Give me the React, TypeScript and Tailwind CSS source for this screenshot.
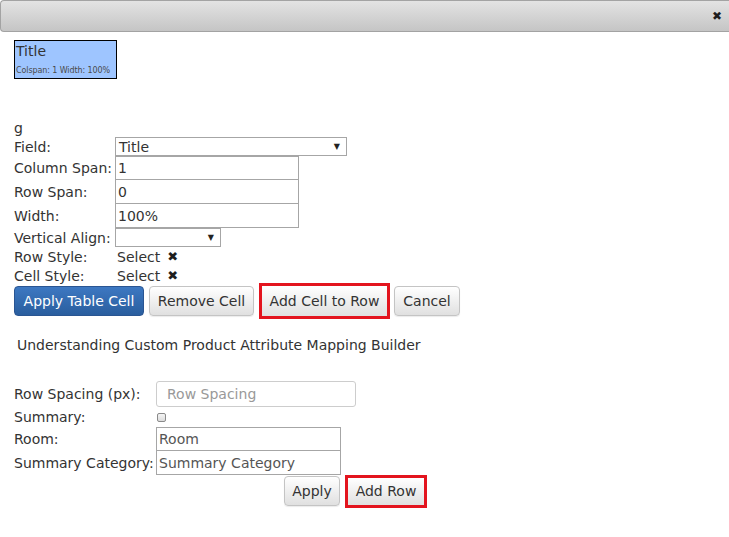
const btn =
  "h-[30px] rounded-[4px] border border-[#c4c4c4] bg-linear-to-b from-white to-[#e0e0e0] text-[14px] text-[#333] shadow-[0_1px_1px_rgba(0,0,0,0.08)] flex items-center justify-center";

function FakeSelect({ value, width }: { value: string; width: string }) {
  return (
    <div
      className={`${width} h-[19px] border border-[#a6a6a6] bg-white flex items-center justify-between pl-[3px] pr-[6px]`}
    >
      <span className="leading-none">{value}</span>
      <span className="text-[8px] leading-none text-[#222]">▼</span>
    </div>
  );
}

function Cell({ h, children }: { h: string; children?: React.ReactNode }) {
  return <div className={`${h} flex items-center whitespace-nowrap leading-none`}>{children}</div>;
}

function Picker() {
  return (
    <div className="h-[19px] flex items-center gap-[7px] pl-[2px] leading-none">
      <span>Select</span>
      <span className="text-[13px] leading-none text-[#1e1e1e]">✖</span>
    </div>
  );
}

export default function App() {
  return (
    <div className="min-h-[537px] bg-white text-[14px] text-[#333] font-['DejaVu_Sans',Verdana,sans-serif]">
      <div className="h-[32px] rounded-l-[4px] border border-r-0 border-[#a3a3a3] bg-linear-to-b from-[#e3e3e3] to-[#c5c5c5] flex items-center justify-end pr-[7px]">
        <span className="text-[12px] text-[#1e1e1e] leading-none">✖</span>
      </div>

      <div className="pl-[14px]">
        <div className="mt-[8px] w-[103px] h-[39px] border border-black bg-[#9ec5ff] flex flex-col">
          <span className="pl-[1px] pt-[1px] leading-[18px] text-[#333]">Title</span>
          <span className="pl-[1px] mt-[6px] text-[8px] leading-[9px] tracking-[-0.1px] text-[#4a4a4a] whitespace-nowrap">
            Colspan: 1 Width: 100%
          </span>
        </div>

        <div className="mt-[40px] h-[18px] leading-[18px]">g</div>

        <div className="grid grid-cols-[101px_auto] justify-start">
          <Cell h="h-[19px]">Field:</Cell>
          <FakeSelect value="Title" width="w-[232px]" />

          <Cell h="h-[24px]">Column Span:</Cell>
          <div className="w-[184px] h-[24px] border border-[#a6a6a6] flex items-center pl-[2px] leading-none">1</div>

          <Cell h="h-[24px]">Row Span:</Cell>
          <div className="w-[184px] h-[24px] border border-t-0 border-[#a6a6a6] flex items-center pl-[2px] leading-none">0</div>

          <Cell h="h-[24px]">Width:</Cell>
          <div className="w-[184px] h-[24px] border border-t-0 border-[#a6a6a6] flex items-center pl-[2px] leading-none">100%</div>

          <Cell h="h-[19px]">Vertical Align:</Cell>
          <FakeSelect value="" width="w-[106px]" />

          <Cell h="h-[19px]">Row Style:</Cell>
          <Picker />

          <Cell h="h-[19px]">Cell Style:</Cell>
          <Picker />
        </div>

        <div className="mt-[1px] flex items-center">
          <button className="w-[130px] h-[30px] rounded-[4px] border border-[#2a5592] bg-linear-to-b from-[#3d78c2] to-[#2a5e9e] text-white text-[14px] flex items-center justify-center">
            Apply Table Cell
          </button>
          <button className={`${btn} ml-[5px] w-[105px]`}>Remove Cell</button>
          <div className="ml-[5px] -my-[3px] w-[131px] h-[36px] border-[3px] border-[#e3141e] flex">
            <div className="flex-1 bg-linear-to-b from-white to-[#e0e0e0] flex items-center justify-center">
              Add Cell to Row
            </div>
          </div>
          <button className={`${btn} ml-[4px] w-[66px]`}>Cancel</button>
        </div>

        <p className="mt-[20px] pl-[3px] leading-[18px]">
          Understanding Custom Product Attribute Mapping Builder
        </p>

        <div className="mt-[27px] grid grid-cols-[142px_auto] justify-start">
          <Cell h="h-[26px]">Row Spacing (px):</Cell>
          <div className="w-[200px] h-[26px] rounded-[3px] border border-[#cdcdcd] flex items-center pl-[10px] text-[#999] leading-none">
            Row Spacing
          </div>

          <Cell h="h-[20px]">Summary:</Cell>
          <div className="h-[20px] flex items-center pl-[1px]">
            <div className="w-[9px] h-[9px] rounded-[2px] border border-[#8a8a8a] bg-linear-to-b from-[#f4f4f4] to-[#dcdcdc]" />
          </div>

          <Cell h="h-[24px]">Room:</Cell>
          <div className="w-[185px] h-[24px] border border-[#a6a6a6] flex items-center pl-[2px] text-[#555] leading-none">Room</div>

          <Cell h="h-[24px]">Summary Category:</Cell>
          <div className="w-[185px] h-[24px] border border-t-0 border-[#a6a6a6] flex items-center pl-[2px] text-[#555] leading-none">
            Summary Category
          </div>
        </div>

        <div className="mt-[1px] flex items-center pl-[270px]">
          <button className={`${btn} w-[56px]`}>Apply</button>
          <div className="ml-[5px] -my-[2px] w-[82px] h-[33px] border-[3px] border-[#e3141e] flex">
            <div className="flex-1 bg-linear-to-b from-white to-[#e0e0e0] flex items-center justify-center">
              Add Row
            </div>
          </div>
        </div>
      </div>
    </div>
  );
}
